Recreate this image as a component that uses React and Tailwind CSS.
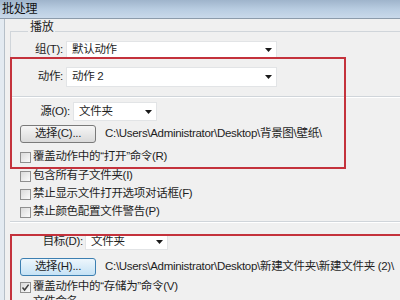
const Arrow = () => (
  <svg width="7" height="4" viewBox="0 0 7 4" className="shrink-0">
    <path d="M0 0H7L3.5 4Z" fill="#1a1a1a" />
  </svg>
);

const Dropdown = ({ className, value }) => (
  <div
    className={
      "flex items-center justify-between bg-white border border-[#e2e4e6] pl-[5px] pr-[4px] " +
      className
    }
  >
    <span>{value}</span>
    <Arrow />
  </div>
);

const Checkbox = ({ checked, label, className }) => (
  <div className={"flex items-center h-[14px] " + className}>
    <div className="w-[11px] h-[11px] border border-[#8f8f8f] bg-gradient-to-br from-[#dadada] to-[#fbfbfb] flex items-center justify-center">
      {checked && (
        <svg width="9" height="9" viewBox="0 0 9 9">
          <path d="M1.5 4.5L3.6 7L7.6 1.6" fill="none" stroke="#3d3d3d" strokeWidth="1.5" />
        </svg>
      )}
    </div>
    <span className="ml-[2px]">{label}</span>
  </div>
);

const Button = ({ label, focused }) => (
  <div
    className={
      focused
        ? "w-[76px] h-[18px] flex items-center justify-center rounded-[3px] border border-[#3c7fb1] bg-gradient-to-b from-[#edf6fc] to-[#c5e2f5]"
        : "w-[76px] h-[18px] flex items-center justify-center rounded-[3px] border border-[#7a7a7a] bg-gradient-to-b from-[#f6f6f6] to-[#dadada]"
    }
  >
    {label}
  </div>
);

export default function App() {
  return (
    <div className="relative w-[400px] h-[300px] overflow-hidden bg-[#f0f0f0] font-['Liberation_Sans','Noto_Sans_CJK_SC',sans-serif] text-[11.5px] leading-none text-[#1e1e1e] tracking-[-0.3px]">
      <div className="h-[19px] flex items-center pl-[2px] bg-gradient-to-b from-[#9fb4cb] via-[#b8cce1] to-[#c9d9ea] border-b border-[#8c9bab]">
        <span className="text-[12px] text-[#111]">批处理</span>
      </div>

      <div className="flex">
        <div className="w-[5px] shrink-0 bg-[#e3eaf1] border-r border-[#b6bfc8]" />
        <div className="flex-1 flex flex-col">
          {/* 播放 group */}
          <div className="relative ml-[5px] mt-[12px] border-t border-l border-b border-[#d0d5da] pb-[9px]">
            <span className="absolute -top-[11px] left-[17px] px-[2px] bg-[#f0f0f0] text-[12px]">播放</span>
            <div className="mt-[9px] h-[17px] flex items-center">
              <span className="w-[52px] text-right">组(T):</span>
              <Dropdown className="ml-[3px] w-[211px] h-[17px]" value="默认动作" />
            </div>
            <div className="mt-[9px] h-[20px] flex items-center">
              <span className="w-[52px] text-right">动作:</span>
              <Dropdown className="ml-[3px] w-[211px] h-[20px]" value="动作 2" />
            </div>
          </div>
          <div className="ml-[5px] h-[1px] bg-white" />

          {/* 源 */}
          <div className="mt-[4px] h-[19px] flex items-center">
            <span className="w-[65px] text-right">源(O):</span>
            <Dropdown className="ml-[3px] w-[84px] h-[19px]" value="文件夹" />
          </div>
          <div className="mt-[4px] h-[18px] flex items-center ml-[15px]">
            <Button label="选择(C)..." />
            <span className="ml-[9px]">{"C:\\Users\\Administrator\\Desktop\\背景图\\壁纸\\"}</span>
          </div>
          <Checkbox className="mt-[7px] ml-[15px]" label="覆盖动作中的“打开”命令(R)" />
          <Checkbox className="mt-[5px] ml-[15px]" label="包含所有子文件夹(I)" />
          <Checkbox className="mt-[4px] ml-[15px]" label="禁止显示文件打开选项对话框(F)" />
          <Checkbox className="mt-[4px] ml-[15px]" label="禁止颜色配置文件警告(P)" />
          <div className="mt-[2px] ml-[5px] h-[1px] bg-[#d0d5da]" />
          <div className="ml-[5px] h-[1px] bg-white" />

          {/* 目标 */}
          <div className="mt-[10px] h-[18px] flex items-center">
            <span className="w-[78px] text-right">目标(D):</span>
            <Dropdown className="ml-[2px] w-[83px] h-[16px]" value="文件夹" />
          </div>
          <div className="mt-[7px] h-[18px] flex items-center ml-[15px]">
            <Button label="选择(H)..." focused />
            <span className="ml-[9px] whitespace-nowrap">{"C:\\Users\\Administrator\\Desktop\\新建文件夹\\新建文件夹 (2)\\"}</span>
          </div>
          <Checkbox checked className="mt-[4px] ml-[15px]" label="覆盖动作中的“存储为”命令(V)" />
          <div className="mt-[1px] h-[14px] ml-[28px] flex items-center">文件命名</div>
        </div>
      </div>

      {/* annotation boxes */}
      <div className="absolute left-[10px] top-[57px] w-[336px] h-[112px] border-2 border-[#c4323c]" />
      <div className="absolute left-[10px] top-[234px] w-[400px] h-[100px] border-2 border-[#c4323c]" />
    </div>
  );
}
